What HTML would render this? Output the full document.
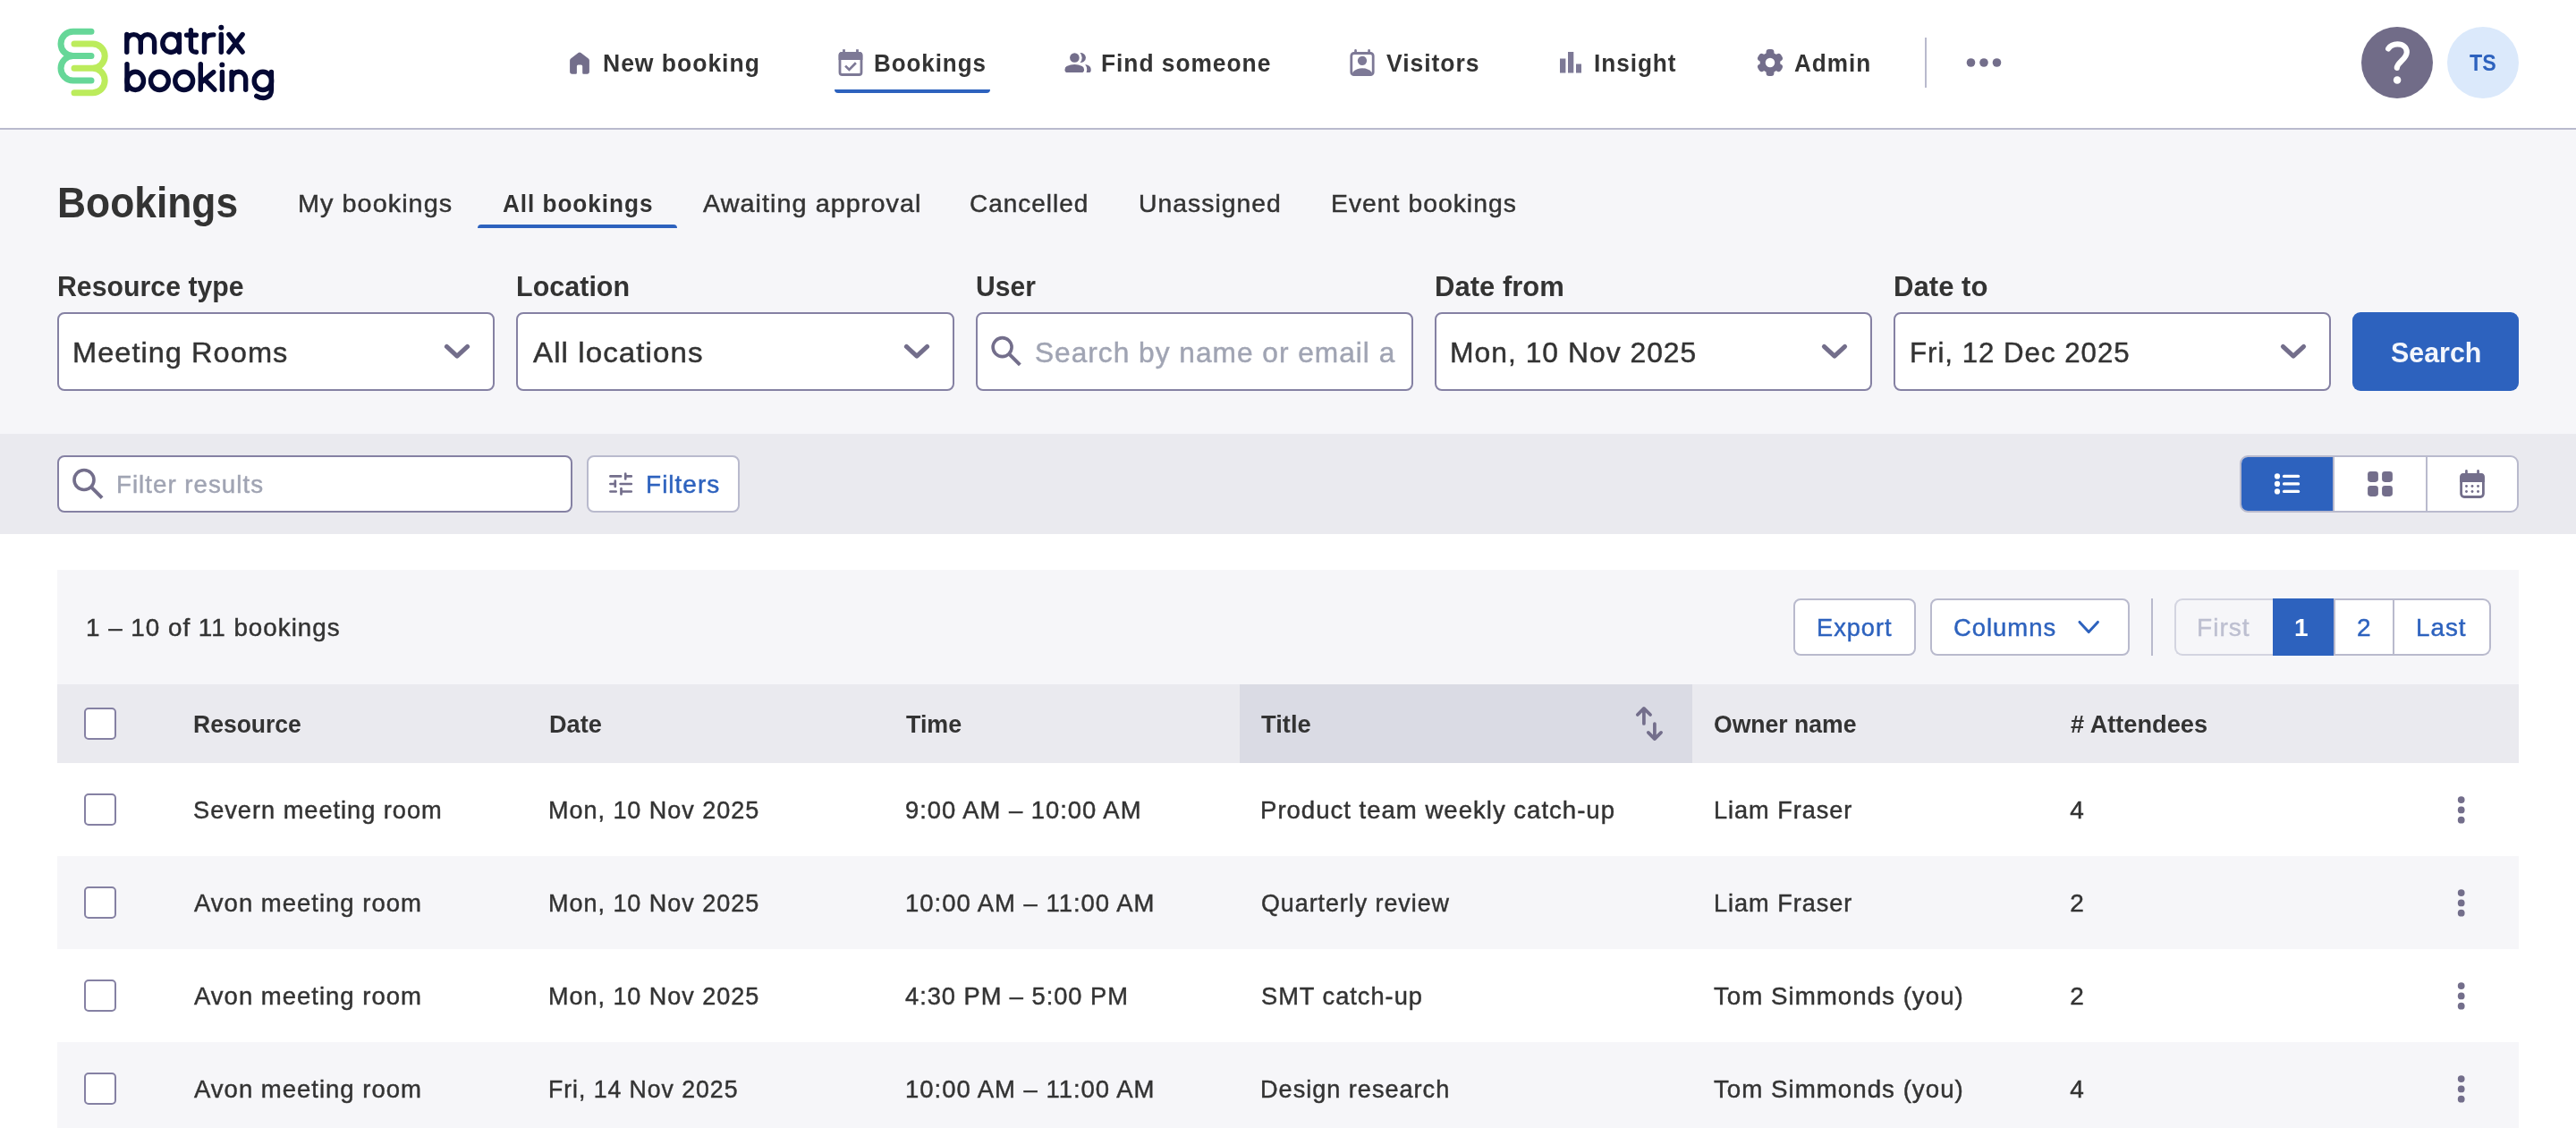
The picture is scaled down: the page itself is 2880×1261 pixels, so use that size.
<!DOCTYPE html>
<html lang="en">
<head>
<meta charset="utf-8">
<title>Bookings - Matrix Booking</title>
<style>
*{box-sizing:border-box;margin:0;padding:0}
html,body{width:2880px;height:1261px;overflow:hidden;background:#fff}
body{position:relative;font-family:"Liberation Sans",sans-serif;color:#333;-webkit-font-smoothing:antialiased}
.a{position:absolute}
.t{position:absolute;white-space:nowrap;line-height:1;transform-origin:0 0}
.bg1{background:#f6f6f9}
.bg2{background:#eaeaef}
.inp{position:absolute;background:#fff;border:2px solid #8581a3;border-radius:8px}
.btn{position:absolute;background:#fff;border:2px solid #b9bacd;border-radius:8px}
.cb{position:absolute;width:36px;height:36px;left:94px;background:#fff;border:2px solid #8581a3;border-radius:5px}
svg{position:absolute;left:0;top:0;overflow:visible}
</style>
</head>
<body>
<!-- header -->
<div class="a" style="left:0;top:143px;width:2880px;height:2px;background:#b9bacd"></div>
<!-- page section -->
<div class="a bg1" style="left:0;top:145px;width:2880px;height:340px"></div>
<div class="a bg2" style="left:0;top:485px;width:2880px;height:112px"></div>
<!-- nav underline -->
<div class="a" style="left:933px;top:100px;width:174px;height:4px;background:#2d62be;border-radius:0 0 4px 4px"></div>
<!-- nav divider -->
<div class="a" style="left:2152px;top:42px;width:2px;height:56px;background:#b9bacd"></div>
<!-- tab underline -->
<div class="a" style="left:534px;top:251px;width:223px;height:4px;background:#2d62be;border-radius:4px 4px 0 0"></div>
<!-- help + avatar -->
<div class="a" style="left:2640px;top:30px;width:80px;height:80px;border-radius:50%;background:#716c88"></div>
<div class="a" style="left:2736px;top:30px;width:80px;height:80px;border-radius:50%;background:#dbe9fb"></div>
<!-- inputs -->
<div class="inp" style="left:64px;top:349px;width:489px;height:88px"></div>
<div class="inp" style="left:577px;top:349px;width:490px;height:88px"></div>
<div class="inp" style="left:1091px;top:349px;width:489px;height:88px"></div>
<div class="inp" style="left:1604px;top:349px;width:489px;height:88px"></div>
<div class="inp" style="left:2117px;top:349px;width:489px;height:88px"></div>
<div class="a" style="left:2630px;top:349px;width:186px;height:88px;background:#2d62be;border-radius:9px"></div>
<!-- filter bar -->
<div class="inp" style="left:64px;top:509px;width:576px;height:64px;border-radius:8px"></div>
<div class="btn" style="left:656px;top:509px;width:171px;height:64px;border-radius:8px"></div>
<!-- view toggle -->
<div class="btn" style="left:2504px;top:509px;width:312px;height:64px;border-radius:9px;overflow:hidden">
  <div class="a" style="left:0;top:0;width:102px;height:60px;background:#2d62be"></div>
  <div class="a" style="left:102px;top:0;width:2px;height:60px;background:#b9bacd"></div>
  <div class="a" style="left:206px;top:0;width:2px;height:60px;background:#b9bacd"></div>
</div>
<!-- card -->
<div class="a bg1" style="left:64px;top:637px;width:2752px;height:128px"></div>
<div class="a bg2" style="left:64px;top:765px;width:2752px;height:88px"></div>
<div class="a" style="left:1386px;top:765px;width:506px;height:88px;background:#dadbe4"></div>
<div class="a bg1" style="left:64px;top:957px;width:2752px;height:104px"></div>
<div class="a bg1" style="left:64px;top:1165px;width:2752px;height:104px"></div>
<!-- toolbar buttons -->
<div class="btn" style="left:2005px;top:669px;width:137px;height:64px"></div>
<div class="btn" style="left:2158px;top:669px;width:223px;height:64px"></div>
<div class="a" style="left:2405px;top:669px;width:2px;height:64px;background:#b9bacd"></div>
<!-- pagination -->
<div class="a" style="left:2431px;top:669px;width:112px;height:64px;border:2px solid #d3d4e0;border-right:none;border-radius:9px 0 0 9px"></div>
<div class="a" style="left:2609px;top:669px;width:176px;height:64px;background:#fff;border:2px solid #b9bacd;border-left:none;border-radius:0 9px 9px 0"></div>
<div class="a" style="left:2675px;top:671px;width:2px;height:60px;background:#b9bacd"></div>
<div class="a" style="left:2609px;top:671px;width:2px;height:60px;background:#b9bacd"></div>
<div class="a" style="left:2541px;top:669px;width:68px;height:64px;background:#2d62be"></div>
<!-- checkboxes -->
<div class="cb" style="top:791px"></div>
<div class="cb" style="top:887px"></div>
<div class="cb" style="top:991px"></div>
<div class="cb" style="top:1095px"></div>
<div class="cb" style="top:1199px"></div>
<svg width="2880" height="1261" viewBox="0 0 2880 1261">
<g fill="none" stroke-width="7" stroke-linecap="round">
<path d="M102,35.2 H81.7 A13.7,13.7 0 0 0 81.7,62.6 H102 M81.7,62.6 A13.7,13.7 0 0 0 81.7,90 H102" stroke="#66d798"/>
<path d="M83,48.9 H103.5 A13.7,13.7 0 0 1 103.5,76.3 H83 M103.5,76.3 A13.7,13.7 0 0 1 103.5,103.7 H83" stroke="#bcec5c"/>
</g>
<g fill="none" stroke="#050934" stroke-width="5.4" stroke-linecap="round" stroke-linejoin="round">
<path d="M141.8,38.4 V58.3 M141.8,46.4 A7.75,7.75 0 0 1 157.3,46.4 V58.3 M157.3,46.4 A7.65,7.75 0 0 1 172.6,46.4 V58.3"/>
<ellipse cx="191.1" cy="48.4" rx="9.3" ry="10.1"/><path d="M200.4,38.4 V58.3"/>
<path d="M213.4,33.8 V52.6 Q213.4,58.3 219.4,58.2 M208.6,39.2 H219.4"/>
<path d="M228.5,38.4 V58.3 M228.5,47.6 C228.5,42 232,38.7 238.8,38.9"/>
<path d="M247.3,38.4 V58.3"/>
<path d="M255.9,38.5 L271.1,58.2 M271.1,38.5 L255.9,58.2"/>
<path d="M142,71.6 V100.3"/><ellipse cx="151.3" cy="90.4" rx="9.2" ry="10.1"/>
<ellipse cx="178.4" cy="90.4" rx="9.9" ry="10.1"/><ellipse cx="205.7" cy="90.4" rx="9.9" ry="10.1"/>
<path d="M224.3,71.6 V100.3 M225.5,91.6 L238.7,80.6 M229.6,89.6 L239.8,100.2"/>
<path d="M248.4,80.4 V100.3"/>
<path d="M259.1,80.4 V100.3 M259.1,88.1 A7.8,7.8 0 0 1 274.7,88.1 V100.3"/>
<ellipse cx="293.9" cy="90.4" rx="9.7" ry="10.1"/><path d="M303.4,80.4 V100.5 C303.4,110 294,111.3 286.8,107.3"/>
</g>
<circle cx="247.3" cy="30.7" r="3.0" fill="#050934"/><circle cx="248.3" cy="72.4" r="2.95" fill="#050934"/>
<path d="M646.6,59.1 Q648,58 649.4,59.1 L657.9,65.5 Q658.9,66.3 658.9,67.6 V80.1 Q658.9,82.7 656.3,82.7 H652.4 Q651.2,82.7 651.2,81.5 V74 Q651.2,72.5 649.7,72.5 H646.4 Q644.9,72.5 644.9,74 V81.5 Q644.9,82.7 643.7,82.7 H639.7 Q637.1,82.7 637.1,80.1 V67.6 Q637.1,66.3 638.1,65.5 Z" fill="#736e8b"/>
<rect x="939" y="59.5" width="24" height="24" rx="2.6" fill="none" stroke="#7d7996" stroke-width="2.8"/><path d="M937.6,67 V61.6 A3.5,3.5 0 0 1 941.1,58.1 H960.9 A3.5,3.5 0 0 1 964.4,61.6 V67 Z" fill="#7d7996"/><rect x="942.1" y="55.2" width="2.8" height="5" fill="#7d7996"/><rect x="957.1" y="55.2" width="2.8" height="5" fill="#7d7996"/><path d="M945.1,73.6 L949.4,77.9 L956.9,70.2" fill="none" stroke="#7d7996" stroke-width="2.7"/>
<circle cx="1201.4" cy="64.5" r="5.3" fill="#736e8b"/><path d="M1193.3,81 Q1190.5,81 1190.5,78.2 V77.7 Q1190.5,75.3 1192.6,74.1 C1195.5,72.6 1198.3,71.9 1201.3,71.9 C1204.3,71.9 1207,72.6 1209.9,74.1 Q1212,75.3 1212,77.7 V78.2 Q1212,81 1209.2,81 Z" fill="#736e8b"/>
<clipPath id="cr1"><path d="M1209.6,64.5 m-20,-20 h40 v40 h-40 z M1201.4,64.5 m-8.3,0 a8.3,8.3 0 1 0 16.6,0 a8.3,8.3 0 1 0 -16.6,0" clip-rule="evenodd"/></clipPath>
<circle cx="1208.5" cy="64.5" r="5.4" fill="#736e8b" clip-path="url(#cr1)"/>
<path d="M1213.2,72 C1216,72.6 1217.6,73.4 1218.6,74.6 Q1219.7,76 1219.7,77.8 V78.4 Q1219.7,81 1217.1,81 H1214.6 Q1215.2,79.6 1215.2,77.6 Q1215.2,74.6 1213.2,72 Z" fill="#736e8b"/>
<clipPath id="vc"><rect x="1512.2" y="61" width="21.6" height="22.6"/></clipPath>
<rect x="1510.8" y="59.5" width="24.4" height="24.1" rx="2.9" fill="none" stroke="#7d7996" stroke-width="2.8"/><path d="M1515.55,56.4 V59.5 M1530.6,56.4 V59.5" stroke="#7d7996" stroke-width="2.7" stroke-linecap="round"/><circle cx="1523" cy="67.8" r="5.15" fill="#7d7996"/><ellipse cx="1523" cy="90" rx="14.5" ry="13.8" fill="#7d7996" clip-path="url(#vc)"/>
<rect x="1744" y="65.5" width="6.4" height="16" fill="#7d7996"/><rect x="1753" y="58" width="6.3" height="23.5" fill="#7d7996"/><rect x="1762" y="71.5" width="6" height="10" fill="#7d7996"/>
<circle cx="1979" cy="70" r="11.3" fill="#736e8b"/><rect x="1974.6" y="55.1" width="8.8" height="8.9" rx="3.2" fill="#736e8b" transform="rotate(0 1979 70)"/><rect x="1974.6" y="55.1" width="8.8" height="8.9" rx="3.2" fill="#736e8b" transform="rotate(60 1979 70)"/><rect x="1974.6" y="55.1" width="8.8" height="8.9" rx="3.2" fill="#736e8b" transform="rotate(120 1979 70)"/><rect x="1974.6" y="55.1" width="8.8" height="8.9" rx="3.2" fill="#736e8b" transform="rotate(180 1979 70)"/><rect x="1974.6" y="55.1" width="8.8" height="8.9" rx="3.2" fill="#736e8b" transform="rotate(240 1979 70)"/><rect x="1974.6" y="55.1" width="8.8" height="8.9" rx="3.2" fill="#736e8b" transform="rotate(300 1979 70)"/><circle cx="1979" cy="70" r="5.25" fill="#fff"/>
<circle cx="2203.5" cy="70" r="4.8" fill="#736e8b"/>
<circle cx="2218" cy="70" r="4.8" fill="#736e8b"/>
<circle cx="2232.5" cy="70" r="4.8" fill="#736e8b"/>
<path d="M2670.2,54.4 C2672.2,51.2 2675.8,49.3 2680.3,49.3 C2686.5,49.3 2690.8,53 2690.8,58.3 C2690.8,62.3 2688.2,64.9 2685.2,67.8 C2682,70.9 2680,72.6 2679.8,75.8" fill="none" stroke="#fff" stroke-width="6.2" stroke-linecap="round"/>
<circle cx="2680.1" cy="89.4" r="4.25" fill="#fff"/>
<path d="M499.4,387.40000000000003 L511,398.2 L522.6,387.40000000000003" fill="none" stroke="#736e8b" stroke-width="5" stroke-linecap="round" stroke-linejoin="round"/>
<path d="M1013.4,387.40000000000003 L1025,398.2 L1036.6,387.40000000000003" fill="none" stroke="#736e8b" stroke-width="5" stroke-linecap="round" stroke-linejoin="round"/>
<path d="M2039.4,387.40000000000003 L2051,398.2 L2062.6,387.40000000000003" fill="none" stroke="#736e8b" stroke-width="5" stroke-linecap="round" stroke-linejoin="round"/>
<path d="M2552.4,387.40000000000003 L2564,398.2 L2575.6,387.40000000000003" fill="none" stroke="#736e8b" stroke-width="5" stroke-linecap="round" stroke-linejoin="round"/>
<circle cx="1120.6" cy="388.1" r="10.5" fill="none" stroke="#736e8b" stroke-width="3.6"/><path d="M1128.8245499999998,396.32455000000004 L1140.3245499999998,407.82455000000004" stroke="#736e8b" stroke-width="4.0" stroke-linecap="butt"/>
<circle cx="94" cy="536.5" r="11" fill="none" stroke="#736e8b" stroke-width="3.6"/><path d="M102.57809999999999,545.0781 L114.07809999999999,556.5781" stroke="#736e8b" stroke-width="4.0" stroke-linecap="butt"/>
<g stroke="#736e8b" stroke-width="2.7" stroke-linecap="round" fill="none"><path d="M682.4,532.45 H694.1 M699.25,529.7 V535.5 M700.6,532.45 H705.8"/><path d="M682.4,541 H686.4 M687.8,537.7 V544 M693.6,541 H705.8"/><path d="M682.4,549.5 H688.7 M694.5,546.2 V552.5 M695.8,549.5 H705.8"/></g>
<circle cx="2546" cy="532.45" r="3.1" fill="#fff"/><path d="M2553.5,532.45 H2569.6" stroke="#fff" stroke-width="3.2" stroke-linecap="round"/>
<circle cx="2546" cy="540.96" r="3.1" fill="#fff"/><path d="M2553.5,540.96 H2569.6" stroke="#fff" stroke-width="3.2" stroke-linecap="round"/>
<circle cx="2546" cy="549.47" r="3.1" fill="#fff"/><path d="M2553.5,549.47 H2569.6" stroke="#fff" stroke-width="3.2" stroke-linecap="round"/>
<rect x="2647.1" y="527.1" width="11.8" height="11.8" rx="3.3" fill="#736e8b"/>
<rect x="2647.1" y="543.1" width="11.8" height="11.8" rx="3.3" fill="#736e8b"/>
<rect x="2663.1" y="527.1" width="11.8" height="11.8" rx="3.3" fill="#736e8b"/>
<rect x="2663.1" y="543.1" width="11.8" height="11.8" rx="3.3" fill="#736e8b"/>
<rect x="2751.6" y="530.4" width="24.8" height="25.1" rx="3.4" fill="none" stroke="#736e8b" stroke-width="2.8"/><path d="M2750.2,539 V533 A4,4 0 0 1 2754.2,529 H2773.8 A4,4 0 0 1 2777.8,533 V539 Z" fill="#736e8b"/><path d="M2757.45,526.4 V530 M2770.55,526.4 V530" stroke="#736e8b" stroke-width="2.7" stroke-linecap="round"/>
<circle cx="2757.5" cy="543.5" r="1.45" fill="#736e8b"/>
<circle cx="2757.5" cy="549.5" r="1.45" fill="#736e8b"/>
<circle cx="2764" cy="543.5" r="1.45" fill="#736e8b"/>
<circle cx="2764" cy="549.5" r="1.45" fill="#736e8b"/>
<circle cx="2770.5" cy="543.5" r="1.45" fill="#736e8b"/>
<circle cx="2770.5" cy="549.5" r="1.45" fill="#736e8b"/>
<path d="M2325.0,695.4 L2335.2,706.6 L2345.3999999999996,695.4" fill="none" stroke="#2d62be" stroke-width="3" stroke-linecap="round" stroke-linejoin="round"/>
<g stroke="#736e8b" stroke-width="3.7" stroke-linecap="round" stroke-linejoin="round" fill="none"><path d="M1837.9,809 V792 M1830.8,799 L1837.9,791.9 L1845.1,799"/><path d="M1849.9,809 V826 M1842.8,818.9 L1849.9,826.1 L1857.1,818.9"/></g>
<circle cx="2751.7" cy="894.1" r="3.9" fill="#736e8b"/><circle cx="2751.7" cy="905.4" r="3.9" fill="#736e8b"/><circle cx="2751.7" cy="916.6999999999999" r="3.9" fill="#736e8b"/>
<circle cx="2751.7" cy="998.1" r="3.9" fill="#736e8b"/><circle cx="2751.7" cy="1009.4" r="3.9" fill="#736e8b"/><circle cx="2751.7" cy="1020.6999999999999" r="3.9" fill="#736e8b"/>
<circle cx="2751.7" cy="1102.1000000000001" r="3.9" fill="#736e8b"/><circle cx="2751.7" cy="1113.4" r="3.9" fill="#736e8b"/><circle cx="2751.7" cy="1124.7" r="3.9" fill="#736e8b"/>
<circle cx="2751.7" cy="1206.1000000000001" r="3.9" fill="#736e8b"/><circle cx="2751.7" cy="1217.4" r="3.9" fill="#736e8b"/><circle cx="2751.7" cy="1228.7" r="3.9" fill="#736e8b"/>
</svg>
<div id="tx" style="position:absolute;left:0;top:0;width:2880px;height:1261px;will-change:transform">
<span class="t" style="left:673.84px;top:57.00px;font-size:28px;color:#333333;letter-spacing:1px;transform:scaleX(0.9492);font-weight:700;">New booking</span>
<span class="t" style="left:977.13px;top:57.00px;font-size:28px;color:#333333;letter-spacing:1px;transform:scaleX(0.9284);font-weight:700;">Bookings</span>
<span class="t" style="left:1230.85px;top:57.00px;font-size:28px;color:#333333;letter-spacing:1px;transform:scaleX(0.9428);font-weight:700;">Find someone</span>
<span class="t" style="left:1549.50px;top:57.00px;font-size:28px;color:#333333;letter-spacing:1px;transform:scaleX(0.9485);font-weight:700;">Visitors</span>
<span class="t" style="left:1782.36px;top:57.00px;font-size:28px;color:#333333;letter-spacing:1px;transform:scaleX(0.9361);font-weight:700;">Insight</span>
<span class="t" style="left:2006.09px;top:57.00px;font-size:28px;color:#333333;letter-spacing:1px;transform:scaleX(0.9349);font-weight:700;">Admin</span>
<span class="t" style="left:2760.81px;top:58.00px;font-size:25px;color:#2d62be;transform:scaleX(0.9294);font-weight:700;">TS</span>
<span class="t" style="left:64.23px;top:202.00px;font-size:49px;color:#333333;transform:scaleX(0.9052);font-weight:700;">Bookings</span>
<span class="t" style="left:333.25px;top:214.00px;font-size:28px;color:#333333;letter-spacing:1px;transform:scaleX(1.0297);-webkit-text-stroke:0.45px;">My bookings</span>
<span class="t" style="left:562.09px;top:214.00px;font-size:28px;color:#333333;letter-spacing:1px;transform:scaleX(0.9356);font-weight:700;">All bookings</span>
<span class="t" style="left:786.00px;top:214.00px;font-size:28px;color:#333333;letter-spacing:1px;transform:scaleX(1.0291);-webkit-text-stroke:0.45px;">Awaiting approval</span>
<span class="t" style="left:1084.19px;top:214.00px;font-size:28px;color:#333333;letter-spacing:1px;transform:scaleX(0.9989);-webkit-text-stroke:0.45px;">Cancelled</span>
<span class="t" style="left:1272.73px;top:214.00px;font-size:28px;color:#333333;letter-spacing:1px;transform:scaleX(1.0127);-webkit-text-stroke:0.45px;">Unassigned</span>
<span class="t" style="left:1487.79px;top:214.00px;font-size:28px;color:#333333;letter-spacing:1px;transform:scaleX(1.0117);-webkit-text-stroke:0.45px;">Event bookings</span>
<span class="t" style="left:64.11px;top:304.00px;font-size:32px;color:#333333;transform:scaleX(0.9461);font-weight:700;">Resource type</span>
<span class="t" style="left:576.84px;top:304.00px;font-size:32px;color:#333333;transform:scaleX(0.9535);font-weight:700;">Location</span>
<span class="t" style="left:1090.59px;top:304.00px;font-size:32px;color:#333333;transform:scaleX(0.9393);font-weight:700;">User</span>
<span class="t" style="left:1603.56px;top:304.00px;font-size:32px;color:#333333;transform:scaleX(0.9697);font-weight:700;">Date from</span>
<span class="t" style="left:2116.56px;top:304.00px;font-size:32px;color:#333333;transform:scaleX(0.9724);font-weight:700;">Date to</span>
<span class="t" style="left:81.21px;top:378.00px;font-size:32px;color:#333333;letter-spacing:1px;transform:scaleX(1.0179);-webkit-text-stroke:0.45px;">Meeting Rooms</span>
<span class="t" style="left:595.50px;top:378.00px;font-size:32px;color:#333333;letter-spacing:1px;transform:scaleX(1.0371);-webkit-text-stroke:0.45px;">All locations</span>
<span class="t" style="left:1157.01px;top:378.00px;font-size:32px;color:#a0a4b3;letter-spacing:1px;transform:scaleX(0.9899);-webkit-text-stroke:0.45px;">Search by name or email a</span>
<span class="t" style="left:1621.01px;top:378.00px;font-size:32px;color:#333333;letter-spacing:1px;transform:scaleX(0.9956);-webkit-text-stroke:0.45px;">Mon, 10 Nov 2025</span>
<span class="t" style="left:2135.06px;top:378.00px;font-size:32px;color:#333333;letter-spacing:1px;transform:scaleX(0.9767);-webkit-text-stroke:0.45px;">Fri, 12 Dec 2025</span>
<span class="t" style="left:2672.52px;top:378.00px;font-size:32px;color:#f3f6fc;transform:scaleX(0.9504);font-weight:700;">Search</span>
<span class="t" style="left:129.83px;top:528.00px;font-size:28px;color:#a0a4b3;letter-spacing:1px;transform:scaleX(0.9913);-webkit-text-stroke:0.45px;">Filter results</span>
<span class="t" style="left:721.56px;top:528.00px;font-size:28px;color:#2d62be;letter-spacing:1px;transform:scaleX(1.0012);-webkit-text-stroke:0.45px;">Filters</span>
<span class="t" style="left:96.26px;top:688.00px;font-size:28px;color:#333333;letter-spacing:1px;transform:scaleX(0.9927);-webkit-text-stroke:0.45px;">1 – 10 of 11 bookings</span>
<span class="t" style="left:2030.87px;top:688.00px;font-size:28px;color:#2d62be;letter-spacing:1px;transform:scaleX(0.9722);-webkit-text-stroke:0.45px;">Export</span>
<span class="t" style="left:2183.71px;top:688.00px;font-size:28px;color:#2d62be;letter-spacing:1px;transform:scaleX(0.9799);-webkit-text-stroke:0.45px;">Columns</span>
<span class="t" style="left:2456.31px;top:688.00px;font-size:28px;color:#bdbfd0;letter-spacing:1px;transform:scaleX(1.0029);-webkit-text-stroke:0.45px;">First</span>
<span class="t" style="left:2564.94px;top:688.00px;font-size:28px;color:#ffffff;font-weight:700;">1</span>
<span class="t" style="left:2635.12px;top:688.00px;font-size:28px;color:#2d62be;-webkit-text-stroke:0.45px;">2</span>
<span class="t" style="left:2700.83px;top:688.00px;font-size:28px;color:#2d62be;letter-spacing:1px;transform:scaleX(0.9938);-webkit-text-stroke:0.45px;">Last</span>
<span class="t" style="left:215.84px;top:796.00px;font-size:28px;color:#333333;transform:scaleX(0.9467);font-weight:700;">Resource</span>
<span class="t" style="left:613.80px;top:796.00px;font-size:28px;color:#333333;transform:scaleX(0.9701);font-weight:700;">Date</span>
<span class="t" style="left:1012.50px;top:796.00px;font-size:28px;color:#333333;transform:scaleX(0.9587);font-weight:700;">Time</span>
<span class="t" style="left:1410.00px;top:796.00px;font-size:28px;color:#333333;transform:scaleX(0.9759);font-weight:700;">Title</span>
<span class="t" style="left:1916.17px;top:796.00px;font-size:28px;color:#333333;transform:scaleX(0.9490);font-weight:700;">Owner name</span>
<span class="t" style="left:2314.58px;top:796.00px;font-size:28px;color:#333333;transform:scaleX(0.9704);font-weight:700;"># Attendees</span>
<span class="t" style="left:216.15px;top:892.00px;font-size:28px;color:#333333;letter-spacing:1px;transform:scaleX(0.9723);-webkit-text-stroke:0.45px;">Severn meeting room</span>
<span class="t" style="left:613.39px;top:892.00px;font-size:28px;color:#333333;letter-spacing:1px;transform:scaleX(0.9647);-webkit-text-stroke:0.45px;">Mon, 10 Nov 2025</span>
<span class="t" style="left:1011.52px;top:892.00px;font-size:28px;color:#333333;letter-spacing:1px;transform:scaleX(0.9788);-webkit-text-stroke:0.45px;">9:00 AM – 10:00 AM</span>
<span class="t" style="left:1408.65px;top:892.00px;font-size:28px;color:#333333;letter-spacing:1px;transform:scaleX(0.9849);-webkit-text-stroke:0.45px;">Product team weekly catch-up</span>
<span class="t" style="left:1915.58px;top:892.00px;font-size:28px;color:#333333;letter-spacing:1px;transform:scaleX(0.9685);-webkit-text-stroke:0.45px;">Liam Fraser</span>
<span class="t" style="left:2314.29px;top:892.00px;font-size:28px;color:#333333;-webkit-text-stroke:0.45px;">4</span>
<span class="t" style="left:216.50px;top:996.00px;font-size:28px;color:#333333;letter-spacing:1px;transform:scaleX(0.9831);-webkit-text-stroke:0.45px;">Avon meeting room</span>
<span class="t" style="left:613.39px;top:996.00px;font-size:28px;color:#333333;letter-spacing:1px;transform:scaleX(0.9647);-webkit-text-stroke:0.45px;">Mon, 10 Nov 2025</span>
<span class="t" style="left:1012.48px;top:996.00px;font-size:28px;color:#333333;letter-spacing:1px;transform:scaleX(0.9816);-webkit-text-stroke:0.45px;">10:00 AM – 11:00 AM</span>
<span class="t" style="left:1409.54px;top:996.00px;font-size:28px;color:#333333;letter-spacing:1px;transform:scaleX(0.9593);-webkit-text-stroke:0.45px;">Quarterly review</span>
<span class="t" style="left:1915.58px;top:996.00px;font-size:28px;color:#333333;letter-spacing:1px;transform:scaleX(0.9685);-webkit-text-stroke:0.45px;">Liam Fraser</span>
<span class="t" style="left:2314.22px;top:996.00px;font-size:28px;color:#333333;-webkit-text-stroke:0.45px;">2</span>
<span class="t" style="left:216.50px;top:1100.00px;font-size:28px;color:#333333;letter-spacing:1px;transform:scaleX(0.9831);-webkit-text-stroke:0.45px;">Avon meeting room</span>
<span class="t" style="left:613.39px;top:1100.00px;font-size:28px;color:#333333;letter-spacing:1px;transform:scaleX(0.9647);-webkit-text-stroke:0.45px;">Mon, 10 Nov 2025</span>
<span class="t" style="left:1012.37px;top:1100.00px;font-size:28px;color:#333333;letter-spacing:1px;transform:scaleX(0.9733);-webkit-text-stroke:0.45px;">4:30 PM – 5:00 PM</span>
<span class="t" style="left:1409.95px;top:1100.00px;font-size:28px;color:#333333;letter-spacing:1px;transform:scaleX(0.9740);-webkit-text-stroke:0.45px;">SMT catch-up</span>
<span class="t" style="left:1916.17px;top:1100.00px;font-size:28px;color:#333333;letter-spacing:1px;transform:scaleX(0.9903);-webkit-text-stroke:0.45px;">Tom Simmonds (you)</span>
<span class="t" style="left:2314.22px;top:1100.00px;font-size:28px;color:#333333;-webkit-text-stroke:0.45px;">2</span>
<span class="t" style="left:216.50px;top:1204.00px;font-size:28px;color:#333333;letter-spacing:1px;transform:scaleX(0.9831);-webkit-text-stroke:0.45px;">Avon meeting room</span>
<span class="t" style="left:613.42px;top:1204.00px;font-size:28px;color:#333333;letter-spacing:1px;transform:scaleX(0.9526);-webkit-text-stroke:0.45px;">Fri, 14 Nov 2025</span>
<span class="t" style="left:1012.48px;top:1204.00px;font-size:28px;color:#333333;letter-spacing:1px;transform:scaleX(0.9816);-webkit-text-stroke:0.45px;">10:00 AM – 11:00 AM</span>
<span class="t" style="left:1408.68px;top:1204.00px;font-size:28px;color:#333333;letter-spacing:1px;transform:scaleX(0.9696);-webkit-text-stroke:0.45px;">Design research</span>
<span class="t" style="left:1916.17px;top:1204.00px;font-size:28px;color:#333333;letter-spacing:1px;transform:scaleX(0.9903);-webkit-text-stroke:0.45px;">Tom Simmonds (you)</span>
<span class="t" style="left:2314.29px;top:1204.00px;font-size:28px;color:#333333;-webkit-text-stroke:0.45px;">4</span>
</div>
<script>(function(){var w=window.innerWidth;if(w&&Math.abs(w-2880)>1){document.body.style.zoom=w/2880;}})();</script>
</body>
</html>
